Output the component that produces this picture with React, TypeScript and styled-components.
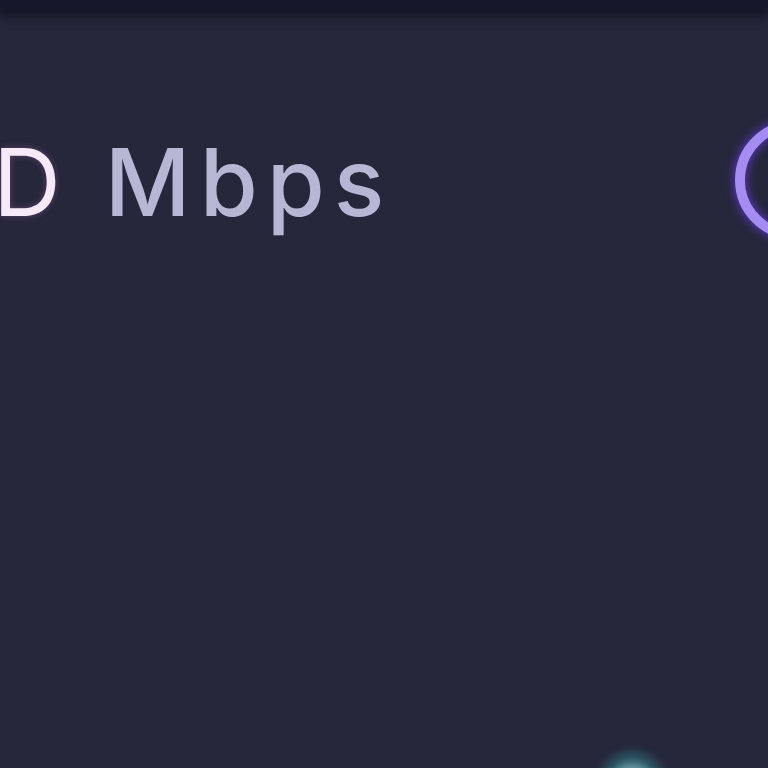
import React from "react";
import styled, { createGlobalStyle } from "styled-components";

const Global = createGlobalStyle`
  html, body { margin: 0; padding: 0; background: #26273b; overflow: hidden; }
  #root { width: 768px; height: 768px; }
`;

const Page = styled.div`
  width: 768px;
  height: 768px;
  overflow: hidden;
  background: #26273b;
  display: flex;
  flex-direction: column;
  font-family: Inter, "Noto Sans", sans-serif;
`;

const TopBar = styled.div`
  height: 8px;
  flex-shrink: 0;
  background: #16172a;
  box-shadow: 0 4px 12px 4px rgba(18, 18, 34, 0.85);
`;

const SpeedRow = styled.div`
  display: flex;
  align-items: center;
  margin-top: 110px;
  height: 124px;
`;

const Readout = styled.div`
  display: flex;
  align-items: baseline;
  gap: 44px;
  margin-left: -7px;
  margin-top: 4px;
  font-size: 94px;
  line-height: 1;
  font-weight: 500;
`;

const Value = styled.span`
  color: #f6eaf8;
  font-weight: 400;
  text-shadow: 0 0 6px rgba(200, 120, 200, 0.35);
`;

const Unit = styled.span`
  color: #b7b7d4;
  letter-spacing: 9px;
`;

const Spacer = styled.div`
  flex: 1;
`;

const Ring = styled.div`
  flex-shrink: 0;
  width: 100px;
  height: 100px;
  margin-right: -87px;
  border-radius: 50%;
  border: 10px solid #a48cf2;
  box-shadow: 0 0 8px 2px rgba(100, 60, 220, 0.7), inset 0 0 8px 2px rgba(100, 60, 220, 0.7);
`;

const Bottom = styled.div`
  margin-top: auto;
  height: 16px;
  display: flex;
  padding-left: 594px;
`;

const Knob = styled.div`
  width: 76px;
  height: 76px;
  flex-shrink: 0;
  margin-top: -6px;
  border-radius: 50%;
  background: radial-gradient(circle at 50% 50%, #9cc8cc 0%, #6fa3ab 26%, #2a5560 48%, rgba(38, 39, 59, 0) 72%);
  filter: blur(2px);
`;

export default function App() {
  return (
    <>
      <Global />
      <Page>
        <TopBar />
        <SpeedRow>
          <Readout>
            <Value>D</Value>
            <Unit>Mbps</Unit>
          </Readout>
          <Spacer />
          <Ring />
        </SpeedRow>
        <Bottom>
          <Knob />
        </Bottom>
      </Page>
    </>
  );
}
